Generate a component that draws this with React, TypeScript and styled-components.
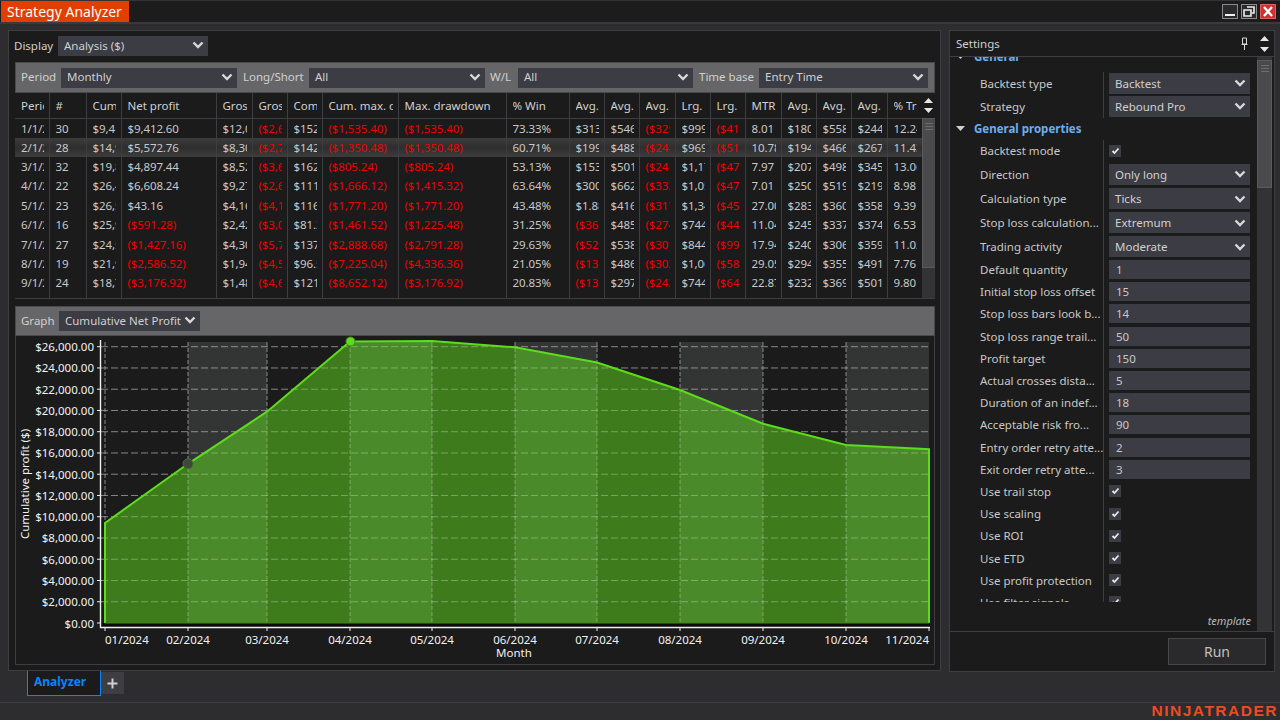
import React from 'react';
import styled, { createGlobalStyle } from 'styled-components';

const GlobalStyle = createGlobalStyle`
  html, body {
    margin: 0;
    padding: 0;
    width: 1280px;
    height: 720px;
    overflow: hidden;
    background: #2d2d30;
  }
  * { box-sizing: border-box; }
  body {
    font-family: "Noto Sans", "Open Sans", "Liberation Sans", sans-serif;
    font-size: 11.5px;
    color: #d0d0d0;
  }
`;

const Page = styled.div`
  width: 1280px;
  height: 720px;
  display: flex;
  flex-direction: column;
`;

const TitleBar = styled.div`
  height: 24px;
  flex: none;
  display: flex;
  align-items: flex-start;
  justify-content: space-between;
  background: #1c1c1d;
  border-top: 1px solid #333336;
  border-bottom: 2px solid #3a3a3d;
  padding: 0 4px 0 1px;
`;

const TitleTab = styled.div`
  width: 128px;
  height: 21px;
  background: #e23e00;
  color: #fff;
  font-size: 14px;
  line-height: 21px;
  padding-left: 6px;
  white-space: nowrap;
`;

const WindowButtons = styled.div`
  display: flex;
  gap: 3px;
  padding-top: 3px;
`;

const WindowButton = styled.div<{ $close?: boolean }>`
  width: 16px;
  height: 15px;
  background: ${p => (p.$close ? '#d03030' : '#2a2a2c')};
  border: 1px solid ${p => (p.$close ? '#e06060' : '#8a8a8a')};
  display: flex;
  align-items: center;
  justify-content: center;
`;

const Main = styled.div`
  height: 647px;
  flex: none;
  display: flex;
  gap: 8px;
  padding: 6px 5px 0 8px;
`;

const LeftPanel = styled.div`
  width: 933px;
  height: 641px;
  background: #1b1b1c;
  border: 1px solid #3e3e42;
  padding: 5px 5px 5px 6px;
  display: flex;
  flex-direction: column;
`;

const DisplayRow = styled.div`
  height: 20px;
  flex: none;
  display: flex;
  align-items: center;
  margin: 0 0 6px -1px;
`;

const Label = styled.span<{ $w?: number; $pad?: number }>`
  width: ${p => (p.$w ? `${p.$w}px` : 'auto')};
  padding-left: ${p => p.$pad ?? 0}px;
  padding-bottom: 2px;
  flex: none;
  color: #d0d0d0;
  white-space: nowrap;
`;

const SelectBox = styled.div<{ $w?: number; $h?: number }>`
  width: ${p => (p.$w ? `${p.$w}px` : '100%')};
  height: ${p => p.$h ?? 20}px;
  background: #3c3c44;
  color: #d0d0d0;
  display: flex;
  align-items: center;
  justify-content: space-between;
  padding: 0 4px 2px 6px;
  white-space: nowrap;
  flex: none;
`;

const Chevron = () => (
  <svg width="12" height="8" viewBox="0 0 12 8">
    <polyline points="1.5,1.5 6,6 10.5,1.5" fill="none" stroke="#d8d8d8" strokeWidth="2.4" />
  </svg>
);

const Select = ({ value, w, h }: { value: string; w?: number; h?: number }) => (
  <SelectBox $w={w} $h={h}>
    {value}
    <Chevron />
  </SelectBox>
);

const FilterBar = styled.div`
  height: 31px;
  flex: none;
  background: #666668;
  border: 1px solid #4a4a4c;
  display: flex;
  align-items: center;
  padding: 0 5px;
`;

const TableArea = styled.div`
  height: 206px;
  flex: none;
  display: flex;
  overflow: hidden;
  border-bottom: 1px solid #3e3e42;
`;

const TableClip = styled.div`
  width: 907px;
  flex: none;
  overflow: hidden;
`;

const Grid = styled.table`
  width: 907px;
  table-layout: fixed;
  border-collapse: collapse;
  border-spacing: 0;
`;

const HeadCell = styled.th`
  height: 25px;
  font-weight: 400;
  text-align: left;
  color: #d0d0d0;
  padding: 0 5px 0 6px;
  border-right: 1px solid #3e3e42;
  border-bottom: 1px solid #3e3e42;
`;

const BodyRow = styled.tr<{ $selected?: boolean }>`
  height: 19.4px;
  background: ${p => (p.$selected ? 'linear-gradient(#3c3c3c, #2e2e2e 50%, #3c3c3c)' : 'transparent')};
`;

const BodyCell = styled.td<{ $neg?: boolean }>`
  color: ${p => (p.$neg ? '#f00000' : '#c8c8c8')};
  padding: 0 5px 0 6px;
  border-right: 1px solid #3e3e42;
  letter-spacing: -0.1px;
`;

const CellText = styled.div`
  overflow: hidden;
  white-space: nowrap;
  line-height: 19px;
`;

const TableScroll = styled.div`
  width: 14px;
  flex: none;
  display: flex;
  flex-direction: column;
`;

const ScrollHead = styled.div`
  height: 25px;
  flex: none;
  display: flex;
  flex-direction: column;
  align-items: center;
  justify-content: center;
  gap: 5px;
  padding-right: 1px;
  background: #1b1b1c;
`;

const ScrollTrack = styled.div`
  flex: 1;
  background: #333336;
`;

const ScrollThumb = styled.div<{ $h: number }>`
  height: ${p => p.$h}px;
  background: #4a4a4c;
  border: 1px solid #5a5a5c;
  display: flex;
  flex-direction: column;
  align-items: center;
  gap: 2px;
  padding-top: 4px;
`;

const Grip = styled.span`
  display: block;
  width: 8px;
  height: 1px;
  background: #6e6e70;
`;

const Arrow = ({ down }: { down?: boolean }) => (
  <svg width="9" height="5" viewBox="0 0 9 5">
    <polygon points={down ? '0,0 9,0 4.5,5' : '0,5 9,5 4.5,0'} fill="#e8e8e8" />
  </svg>
);

const GraphBar = styled(FilterBar)`
  height: 30px;
  margin-top: 7px;
`;

const ChartBox = styled.div`
  flex: 1;
  border: 1px solid #3e3e42;
  border-top: none;
  overflow: hidden;
`;

const ChartSvg = styled.svg`
  display: block;
  width: 918px;
  height: 329px;
  font-family: "Noto Sans", "Open Sans", sans-serif;
  font-size: 11.5px;
`;

const SettingsPanel = styled.div`
  width: 327px;
  height: 642px;
  background: #1b1b1c;
  border: 1px solid #3e3e42;
  display: flex;
  flex-direction: column;
`;

const SettingsHead = styled.div`
  height: 26px;
  flex: none;
  display: flex;
  align-items: center;
  justify-content: space-between;
  padding: 0 5px 0 6px;
  border-bottom: 1px solid #3e3e42;
`;

const HeadTools = styled.div`
  display: flex;
  align-items: center;
  gap: 12px;
`;

const ArrowStack = styled.div`
  display: flex;
  flex-direction: column;
  gap: 6px;
`;

const SettingsMiddle = styled.div`
  height: 575px;
  flex: none;
  display: flex;
  border-bottom: 1px solid #3e3e42;
`;

const SettingsColumn = styled.div`
  width: 307px;
  flex: none;
  display: flex;
  flex-direction: column;
`;

const PropClip = styled.div`
  height: 545px;
  flex: none;
  overflow: hidden;
`;

const PropList = styled.div`
  margin-top: -16.5px;
`;

const SectionHead = styled.div<{ $h: number }>`
  height: ${p => p.$h}px;
  display: flex;
  align-items: center;
  gap: 9px;
  padding-left: 6px;
  font-weight: 700;
  color: #6aaef0;
`;

const PropRow = styled.div<{ $h: number }>`
  height: ${p => p.$h}px;
  display: grid;
  grid-template-columns: 123px 1fr;
  padding-left: 30px;
`;

const PropLabel = styled.div`
  display: flex;
  align-items: center;
  overflow: hidden;
  white-space: nowrap;
  padding-right: 5px;
  color: #c8c8c8;
`;

const PropValue = styled.div`
  border-left: 1px solid #3e3e42;
  padding-left: 5px;
  display: flex;
  align-items: center;

  ${SelectBox} {
    padding-bottom: 0;
  }
`;

const InputBox = styled.div`
  width: 141px;
  height: 19px;
  background: #3c3c44;
  color: #c8c8c8;
  padding-left: 7px;
  line-height: 19px;
`;

const CheckBox = styled.div`
  width: 12px;
  height: 12px;
  background: #3c3c44;
  display: flex;
  align-items: center;
  justify-content: center;
`;

const TemplateLabel = styled.div`
  flex: 1;
  text-align: right;
  font-style: italic;
  font-size: 11px;
  color: #b8b8b8;
  padding: 11px 6px 0 0;
`;

const SettingsScroll = styled.div`
  width: 15px;
  flex: none;
  background: #333336;
  padding-top: 3px;
`;

const RunRow = styled.div`
  flex: 1;
  display: flex;
  justify-content: flex-end;
  align-items: flex-start;
  padding: 6px 8px 0 0;
`;

const RunButton = styled.div`
  width: 98px;
  height: 27px;
  background: #2a2a2d;
  border: 1px solid #48484b;
  color: #c0c0c0;
  font-size: 14px;
  text-align: center;
  line-height: 25px;
`;

const TabStrip = styled.div`
  height: 32px;
  flex: none;
  display: flex;
  align-items: flex-start;
  padding-left: 27px;
  border-bottom: 1px solid #3e3e42;
`;

const ActiveTab = styled.div`
  width: 74px;
  height: 25px;
  background: #1b1b1c;
  border: 1px solid #0a84ff;
  border-top: none;
  color: #0a84ff;
  font-size: 12px;
  font-weight: 700;
  padding-left: 6px;
  line-height: 21px;
`;

const AddTab = styled.div`
  width: 23px;
  height: 22px;
  margin-top: 1px;
  background: #3e3e42;
  display: flex;
  align-items: center;
  justify-content: center;
`;

const Footer = styled.div`
  flex: 1;
  display: flex;
  justify-content: flex-end;
  align-items: center;
  padding: 0 2px 5px 0;
`;

const Logo = styled.div`
  font-family: "Liberation Sans", Arial, sans-serif;
  font-weight: 700;
  font-size: 15.5px;
  letter-spacing: 1.5px;
  color: #f04a20;
  line-height: 15px;
`;

const columns = [
  { title: 'Period', w: 34 }, { title: '#', w: 37 }, { title: 'Cum. net profit', w: 35 },
  { title: 'Net profit', w: 95 }, { title: 'Gross profit', w: 36 }, { title: 'Gross loss', w: 35 },
  { title: 'Commission', w: 35 }, { title: 'Cum. max. drawdown', w: 76 }, { title: 'Max. drawdown', w: 108 },
  { title: '% Win', w: 63 }, { title: 'Avg. trade', w: 35 }, { title: 'Avg. win', w: 35 },
  { title: 'Avg. loss', w: 36 }, { title: 'Lrg. win', w: 35 }, { title: 'Lrg. loss', w: 35 },
  { title: 'MTR', w: 36 }, { title: 'Avg. MAE', w: 35 }, { title: 'Avg. MFE', w: 35 },
  { title: 'Avg. ETD', w: 36 }, { title: '% Trade', w: 35 },
];

const rows: string[][] = [
  ['1/1/2024', '30', '$9,412.60', '$9,412.60', '$12,092.40', '($2,679.80)', '$152.40', '($1,535.40)', '($1,535.40)', '73.33%', '$313.75', '$546.40', '($325.10)', '$999.60', '($415.20)', '8.01', '$180.20', '$558.30', '$244.10', '12.24'],
  ['2/1/2024', '28', '$14,985.36', '$5,572.76', '$8,302.60', '($2,729.84)', '$142.24', '($1,350.48)', '($1,350.48)', '60.71%', '$199.03', '$488.20', '($248.40)', '$969.40', '($510.60)', '10.78', '$194.60', '$466.40', '$267.80', '11.43'],
  ['3/1/2024', '32', '$19,882.80', '$4,897.44', '$8,521.20', '($3,623.76)', '$162.56', '($805.24)', '($805.24)', '53.13%', '$153.05', '$501.30', '($241.60)', '$1,172.40', '($476.20)', '7.97', '$207.30', '$498.10', '$345.70', '13.06'],
  ['4/1/2024', '22', '$26,491.04', '$6,608.24', '$9,272.60', '($2,664.36)', '$111.76', '($1,666.12)', '($1,415.32)', '63.64%', '$300.37', '$662.20', '($333.10)', '$1,052.40', '($472.80)', '7.01', '$250.40', '$519.20', '$219.60', '8.98'],
  ['5/1/2024', '23', '$26,534.20', '$43.16', '$4,164.80', '($4,121.64)', '$116.84', '($1,771.20)', '($1,771.20)', '43.48%', '$1.88', '$416.40', '($317.20)', '$1,342.60', '($451.20)', '27.00', '$283.10', '$360.70', '$358.40', '9.39'],
  ['6/1/2024', '16', '$25,942.92', '($591.28)', '$2,424.60', '($3,015.88)', '$81.28', '($1,461.52)', '($1,225.48)', '31.25%', '($36.96)', '$485.20', '($274.20)', '$744.60', '($442.80)', '11.04', '$245.30', '$337.40', '$374.20', '6.53'],
  ['7/1/2024', '27', '$24,515.76', '($1,427.16)', '$4,306.40', '($5,733.56)', '$137.16', '($2,888.68)', '($2,791.28)', '29.63%', '($52.86)', '$538.30', '($301.60)', '$844.20', '($996.40)', '17.94', '$240.20', '$306.80', '$359.10', '11.02'],
  ['8/1/2024', '19', '$21,929.24', '($2,586.52)', '$1,944.60', '($4,531.12)', '$96.52', '($7,225.04)', '($4,336.36)', '21.05%', '($136.13)', '$486.20', '($302.40)', '$1,064.80', '($584.40)', '29.05', '$294.40', '$355.10', '$491.30', '7.76'],
  ['9/1/2024', '24', '$18,752.32', '($3,176.92)', '$1,488.20', '($4,665.12)', '$121.92', '($8,652.12)', '($3,176.92)', '20.83%', '($132.37)', '$297.60', '($243.40)', '$744.60', '($642.20)', '22.87', '$232.50', '$369.40', '$501.60', '9.80'],
  ['10/1/2024', '29', '$16,757.48', '($1,994.84)', '$2,712.40', '($4,707.24)', '$147.32', '($10,646.96)', '($2,264.08)', '27.59%', '($68.79)', '$339.10', '($221.50)', '$812.40', '($512.80)', '24.10', '$218.30', '$322.40', '$410.60', '9.60'],
];

type Prop =
  | { kind: 'section'; label: string; h: number }
  | { kind: 'select' | 'input'; label: string; value: string; h: number }
  | { kind: 'check'; label: string; h: number };

const props: Prop[] = [
  { kind: 'section', label: 'General', h: 31 },
  { kind: 'select', label: 'Backtest type', value: 'Backtest', h: 23 },
  { kind: 'select', label: 'Strategy', value: 'Rebound Pro', h: 23 },
  { kind: 'section', label: 'General properties', h: 22 },
  { kind: 'check', label: 'Backtest mode', h: 22 },
  { kind: 'select', label: 'Direction', value: 'Only long', h: 25 },
  { kind: 'select', label: 'Calculation type', value: 'Ticks', h: 24 },
  { kind: 'select', label: 'Stop loss calculation...', value: 'Extremum', h: 24 },
  { kind: 'select', label: 'Trading activity', value: 'Moderate', h: 24 },
  { kind: 'input', label: 'Default quantity', value: '1', h: 22.2 },
  { kind: 'input', label: 'Initial stop loss offset', value: '15', h: 22.2 },
  { kind: 'input', label: 'Stop loss bars look b...', value: '14', h: 22.2 },
  { kind: 'input', label: 'Stop loss range trail...', value: '50', h: 22.2 },
  { kind: 'input', label: 'Profit target', value: '150', h: 22.2 },
  { kind: 'input', label: 'Actual crosses dista...', value: '5', h: 22.2 },
  { kind: 'input', label: 'Duration of an indef...', value: '18', h: 22.2 },
  { kind: 'input', label: 'Acceptable risk fro...', value: '90', h: 22.2 },
  { kind: 'input', label: 'Entry order retry atte...', value: '2', h: 22.2 },
  { kind: 'input', label: 'Exit order retry atte...', value: '3', h: 22.2 },
  { kind: 'check', label: 'Use trail stop', h: 22.2 },
  { kind: 'check', label: 'Use scaling', h: 22.2 },
  { kind: 'check', label: 'Use ROI', h: 22.2 },
  { kind: 'check', label: 'Use ETD', h: 22.2 },
  { kind: 'check', label: 'Use profit protection', h: 22.2 },
  { kind: 'check', label: 'Use filter signals', h: 22.2 },
];

const CheckMark = () => (
  <svg width="9" height="8" viewBox="0 0 9 8">
    <polyline points="1.5,4 3.5,6 7.5,1.5" fill="none" stroke="#e8e8e8" strokeWidth="1.8" />
  </svg>
);

const PropItem = ({ item }: { item: Prop }) => {
  if (item.kind === 'section') {
    return (
      <SectionHead $h={item.h}>
        <svg width="9" height="5" viewBox="0 0 9 5">
          <polygon points="0,0 9,0 4.5,5" fill="#d0d0d0" />
        </svg>
        {item.label}
      </SectionHead>
    );
  }
  return (
    <PropRow $h={item.h}>
      <PropLabel>{item.label}</PropLabel>
      <PropValue>
        {item.kind === 'select' && <Select value={item.value} w={141} h={21} />}
        {item.kind === 'input' && <InputBox>{item.value}</InputBox>}
        {item.kind === 'check' && (
          <CheckBox>
            <CheckMark />
          </CheckBox>
        )}
      </PropValue>
    </PropRow>
  );
};

// chart geometry, in page coordinates
const bandX = [105, 188, 267, 350, 432, 515, 597, 680, 763, 846, 929];
const values = [9412.6, 14985.36, 19882.8, 26491.04, 26534.2, 25942.92, 24515.76, 21929.24, 18752.32, 16757.48, 16350];
const monthLabels = ['01/2024', '02/2024', '03/2024', '04/2024', '05/2024', '06/2024', '07/2024', '08/2024', '09/2024', '10/2024', '11/2024'];
const yOf = (v: number) => 623 - v * (276.3 / 26000);
const yTicks = Array.from({ length: 14 }, (_, i) => i * 2000);
const money = (v: number) => `$${v.toLocaleString('en-US')}.00`;

const Chart = () => {
  const line = values.map((v, i) => `${bandX[i]},${yOf(v).toFixed(1)}`).join(' ');
  const area = `105,623 ${line} 929,623`;
  const gridLines = (stroke: string, opacity: number) => (
    <>
      {yTicks.slice(1).map(v => (
        <line key={v} x1={101} x2={929} y1={yOf(v)} y2={yOf(v)} stroke={stroke} strokeOpacity={opacity} strokeDasharray="7 3" />
      ))}
      {bandX.slice(0, -1).map(x => (
        <line key={x} x1={x} x2={x} y1={342} y2={627} stroke={stroke} strokeOpacity={opacity} strokeDasharray="4 2" />
      ))}
    </>
  );
  return (
    <ChartSvg viewBox="16 336 918 329">
      <defs>
        <clipPath id="areaClip">
          <polygon points={area} />
        </clipPath>
      </defs>
      {bandX.slice(0, -1).map((x, i) =>
        i % 2 === 1 ? <rect key={x} x={x} y={342} width={bandX[i + 1] - x} height={285} fill="#333535" /> : null,
      )}
      {gridLines('#b4b4b4', 0.7)}
      <rect x={101} y={623} width={829} height={4} fill="#0c0c0c" />
      <polygon points={area} fill="#3e7b1d" />
      <g clipPath="url(#areaClip)">
        {bandX.slice(0, -1).map((x, i) =>
          i % 2 === 1 ? <rect key={x} x={x} y={336} width={bandX[i + 1] - x} height={290} fill="#4a8a2a" /> : null,
        )}
        {gridLines('#ffffff', 0.3)}
      </g>
      <polyline points={`105,623 ${line} 929,623`} fill="none" stroke="#5ddc1c" strokeWidth="2" />
      <line x1={105} x2={929} y1={623} y2={623} stroke="#3f8a18" strokeWidth="1" />
      <circle cx={188} cy={yOf(values[1])} r={5} fill="#3d4a38" stroke="#4a6a3a" />
      <circle cx={350.5} cy={yOf(values[3])} r={4.5} fill="#5ddc1c" stroke="#3f8a18" />
      <line x1={100.5} x2={100.5} y1={340} y2={628} stroke="#f0f0f0" strokeWidth="1.4" />
      <line x1={100} x2={930} y1={627.5} y2={627.5} stroke="#f0f0f0" strokeWidth="1.4" />
      {yTicks.map(v => (
        <g key={v}>
          <line x1={97} x2={100} y1={yOf(v)} y2={yOf(v)} stroke="#f0f0f0" />
          <text x={94} y={yOf(v) + 4.5} textAnchor="end" fill="#f2f2f2">{money(v)}</text>
        </g>
      ))}
      {bandX.map((x, i) => (
        <g key={x}>
          <line x1={x} x2={x} y1={628} y2={631} stroke="#f0f0f0" />
          <text
            x={x}
            y={644}
            textAnchor={i === 0 ? 'start' : i === 10 ? 'end' : 'middle'}
            fill="#f2f2f2"
          >
            {monthLabels[i]}
          </text>
        </g>
      ))}
      <text x={514} y={657} textAnchor="middle" fill="#f2f2f2">Month</text>
      <text transform="translate(29 484) rotate(-90)" textAnchor="middle" fill="#f2f2f2">Cumulative profit ($)</text>
    </ChartSvg>
  );
};

export default function App() {
  return (
    <Page>
      <GlobalStyle />
      <TitleBar>
        <TitleTab>Strategy Analyzer</TitleTab>
        <WindowButtons>
          <WindowButton>
            <svg width="12" height="11" viewBox="0 0 12 11">
              <rect x="1" y="8" width="10" height="2" fill="#f0f0f0" />
            </svg>
          </WindowButton>
          <WindowButton>
            <svg width="12" height="11" viewBox="0 0 12 11">
              <path d="M4 1h7v6H9M1 4h7v6H1z" fill="none" stroke="#f0f0f0" strokeWidth="1.6" />
            </svg>
          </WindowButton>
          <WindowButton $close>
            <svg width="12" height="11" viewBox="0 0 12 11">
              <path d="M2 1l8 9M10 1l-8 9" stroke="#fff" strokeWidth="2.4" />
            </svg>
          </WindowButton>
        </WindowButtons>
      </TitleBar>
      <Main>
        <LeftPanel>
          <DisplayRow>
            <Label $w={44}>Display</Label>
            <Select value="Analysis ($)" w={150} h={20} />
          </DisplayRow>
          <FilterBar>
            <Label $w={40}>Period</Label>
            <Select value="Monthly" w={176} />
            <Label $w={72} $pad={6}>Long/Short</Label>
            <Select value="All" w={176} />
            <Label $w={33} $pad={5}>W/L</Label>
            <Select value="All" w={175} />
            <Label $w={66} $pad={6}>Time base</Label>
            <Select value="Entry Time" w={169} />
          </FilterBar>
          <TableArea>
            <TableClip>
              <Grid>
                <colgroup>
                  {columns.map(c => (
                    <col key={c.title} style={{ width: c.w }} />
                  ))}
                </colgroup>
                <thead>
                  <tr>
                    {columns.map(c => (
                      <HeadCell key={c.title}>
                        <CellText>{c.title}</CellText>
                      </HeadCell>
                    ))}
                  </tr>
                </thead>
                <tbody>
                  {rows.map((row, i) => (
                    <BodyRow key={row[0]} $selected={i === 1}>
                      {row.map((cell, j) => (
                        <BodyCell key={j} $neg={cell.startsWith('(')}>
                          <CellText>{cell}</CellText>
                        </BodyCell>
                      ))}
                    </BodyRow>
                  ))}
                </tbody>
              </Grid>
            </TableClip>
            <TableScroll>
              <ScrollHead>
                <Arrow />
                <Arrow down />
              </ScrollHead>
              <ScrollTrack>
                <ScrollThumb $h={150}>
                  <Grip />
                  <Grip />
                  <Grip />
                </ScrollThumb>
              </ScrollTrack>
            </TableScroll>
          </TableArea>
          <GraphBar>
            <Label $w={38}>Graph</Label>
            <Select value="Cumulative Net Profit" w={141} />
          </GraphBar>
          <ChartBox>
            <Chart />
          </ChartBox>
        </LeftPanel>
        <SettingsPanel>
          <SettingsHead>
            <span>Settings</span>
            <HeadTools>
              <svg width="7" height="14" viewBox="0 0 7 14">
                <path d="M1.5 1h4v6h-4zM0.5 7.5h6M3.5 8v5" fill="none" stroke="#d8d8d8" strokeWidth="1" />
              </svg>
              <ArrowStack>
                <Arrow />
                <Arrow down />
              </ArrowStack>
            </HeadTools>
          </SettingsHead>
          <SettingsMiddle>
            <SettingsColumn>
              <PropClip>
                <PropList>
                  {props.map(p => (
                    <PropItem key={p.label} item={p} />
                  ))}
                </PropList>
              </PropClip>
              <TemplateLabel>template</TemplateLabel>
            </SettingsColumn>
            <SettingsScroll>
              <ScrollThumb $h={128}>
                <Grip />
                <Grip />
                <Grip />
              </ScrollThumb>
            </SettingsScroll>
          </SettingsMiddle>
          <RunRow>
            <RunButton>Run</RunButton>
          </RunRow>
        </SettingsPanel>
      </Main>
      <TabStrip>
        <ActiveTab>Analyzer</ActiveTab>
        <AddTab>
          <svg width="11" height="11" viewBox="0 0 11 11">
            <path d="M5.5 0.5v10M0.5 5.5h10" stroke="#d0d0d0" strokeWidth="2" />
          </svg>
        </AddTab>
      </TabStrip>
      <Footer>
        <Logo>NINJATRADER</Logo>
      </Footer>
    </Page>
  );
}
